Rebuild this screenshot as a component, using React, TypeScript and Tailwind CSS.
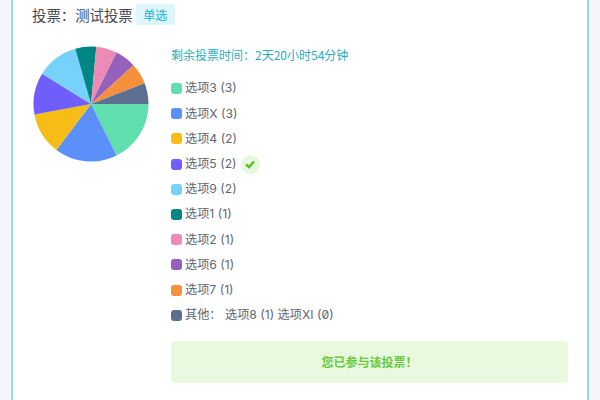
const options = [
  { label: "选项3 (3)", color: "#5fdfae", votes: 3 },
  { label: "选项X (3)", color: "#5b8ff9", votes: 3 },
  { label: "选项4 (2)", color: "#f6bd16", votes: 2 },
  { label: "选项5 (2)", color: "#6f5ef9", votes: 2, voted: true },
  { label: "选项9 (2)", color: "#76d2fa", votes: 2 },
  { label: "选项1 (1)", color: "#008685", votes: 1 },
  { label: "选项2 (1)", color: "#ed8ab5", votes: 1 },
  { label: "选项6 (1)", color: "#9661bc", votes: 1 },
  { label: "选项7 (1)", color: "#f6903d", votes: 1 },
  { label: "其他： 选项8 (1) 选项XI (0)", color: "#5d7092", votes: 1 },
]

const PieChart = () => {
  const total = options.reduce((sum, o) => sum + o.votes, 0)
  let angle = 0
  const slices = options.map((o) => {
    const start = angle
    angle += (o.votes / total) * Math.PI * 2
    const x1 = 58 + 57.5 * Math.cos(start)
    const y1 = 58 + 57.5 * Math.sin(start)
    const x2 = 58 + 57.5 * Math.cos(angle)
    const y2 = 58 + 57.5 * Math.sin(angle)
    return <path key={o.label} d={`M58 58L${x1} ${y1}A57.5 57.5 0 0 1 ${x2} ${y2}Z`} fill={o.color} />
  })
  return (
    <svg width="116" height="116" viewBox="0 0 116 116">
      {slices}
    </svg>
  )
}

export default function App() {
  return (
    <div className="w-[600px] h-[400px] overflow-hidden bg-[#f5f6fb] px-[11px] font-['Noto_Sans_CJK_SC','Noto_Sans',sans-serif]">
      <div className="h-full bg-white border-x-2 border-[#96dde2] pl-[19px] pr-[19px] pt-[4px]">
        <div className="flex items-center h-[21px]">
          <span className="text-[14.4px] leading-[21px] text-[#444b55]">投票：测试投票</span>
          <span className="ml-[3px] h-[21px] px-[7.5px] rounded-[3px] bg-[#dcf6fc] text-[#12b5d8] text-[12px] leading-[21px]">单选</span>
        </div>
        <div className="flex mt-[20px]">
          <div className="w-[139px] shrink-0 mt-[1px] pl-[1px]">
            <PieChart />
          </div>
          <div className="flex-1 pt-[1px]">
            <p className="text-[12px] leading-[18px] text-[#2bacc4]">剩余投票时间：2天20小时54分钟</p>
            <ul className="mt-[12px] font-['Inter','Noto_Sans_CJK_SC',sans-serif] [font-feature-settings:'zero']">
              {options.map((o) => (
                <li key={o.label} className="flex items-center h-[25.2px] text-[12.2px] text-[#5f6670]">
                  <span className="w-[11px] h-[11px] rounded-[3px] mr-[3px]" style={{ backgroundColor: o.color }} />
                  <span>{o.label}</span>
                  {o.voted && (
                    <span className="ml-[4px] w-[19px] h-[19px] rounded-full bg-[#e8f8e0] flex items-center justify-center">
                      <svg width="12" height="12" viewBox="0 0 12 12" fill="none" stroke="#52c41a" strokeWidth="2.4">
                        <path d="M2 6.5L5 9L10 3.5" />
                      </svg>
                    </span>
                  )}
                </li>
              ))}
            </ul>
            <div className="mt-[13px] h-[42px] rounded-[4px] bg-[#e9f9df] flex items-center justify-center text-[12px] font-bold text-[#67c93c]">
              您已参与该投票！
            </div>
          </div>
        </div>
      </div>
    </div>
  )
}
